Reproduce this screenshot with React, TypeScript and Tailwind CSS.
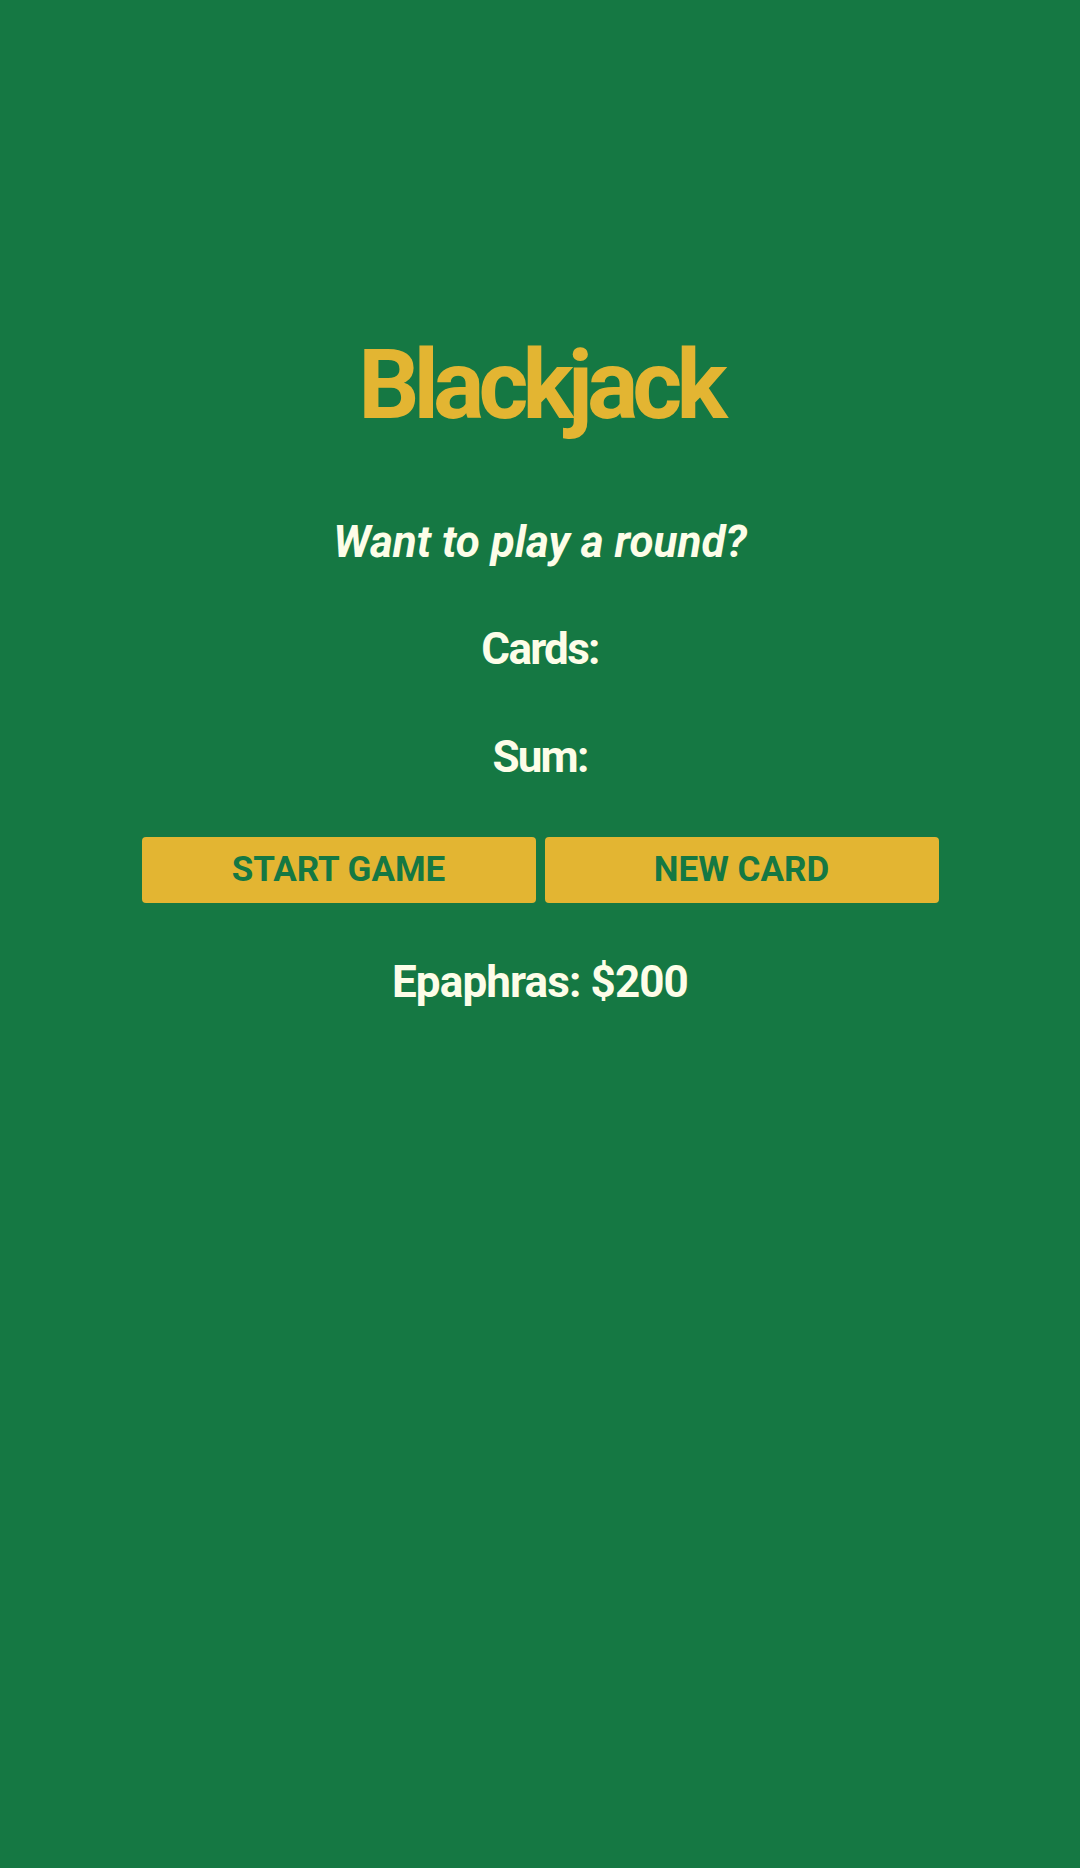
const display = "font-['Roboto',sans-serif]";

export default function App() {
  return (
    <div className={`min-h-[1868px] w-full bg-[#157843] text-center ${display}`}>
      <div className="flex flex-col items-center pt-[337px]">
        <h1 className="text-[96px] font-bold leading-none tracking-[-0.062em] text-[#e3b532]">Blackjack</h1>

        <p className="mt-[87px] text-[44px] font-bold italic leading-none tracking-normal text-[#fdfde8]">
          Want to play a round?
        </p>

        <p className="mt-[63px] text-[44px] font-bold leading-none tracking-[-0.04em] text-[#fdfde8]">Cards:</p>

        <p className="mt-[64px] text-[44px] font-bold leading-none tracking-[-0.04em] text-[#fdfde8]">Sum:</p>

        <div className="mt-[58px] flex gap-[9px]">
          <button className="h-[66px] w-[394px] rounded-[4px] bg-[#e3b532] text-[35px] font-bold text-[#157843]">
            START GAME
          </button>
          <button className="h-[66px] w-[394px] rounded-[4px] bg-[#e3b532] text-[35px] font-bold text-[#157843]">
            NEW CARD
          </button>
        </div>

        <p className="mt-[57px] text-[44px] font-bold leading-none tracking-[-0.02em] text-[#fdfde8]">Epaphras: $200</p>
      </div>
    </div>
  );
}
